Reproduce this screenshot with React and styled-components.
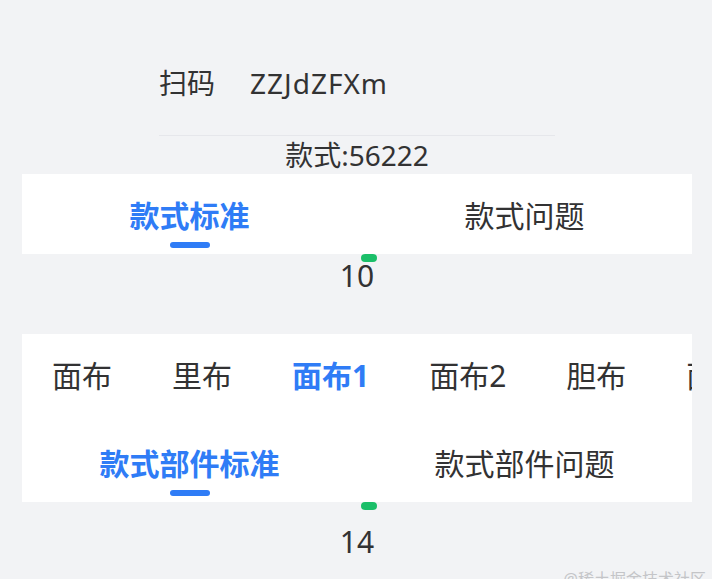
import React from "react";
import styled, { createGlobalStyle } from "styled-components";

const GlobalStyle = createGlobalStyle`
  html, body {
    margin: 0;
    padding: 0;
    background: #f2f3f5;
  }
  body {
    font-family: "Noto Sans", "Noto Sans CJK SC", sans-serif;
    color: #323233;
  }
`;

const Page = styled.div`
  position: relative;
  min-height: 579px;
  padding: 0 20px 0 22px;
  overflow: hidden;
`;

const ScanField = styled.div`
  display: flex;
  align-items: center;
  width: 396px;
  margin-left: 137px;
  padding: 63px 0 32px;
  border-bottom: 1px solid #e6e7eb;
  font-size: 28px;
  line-height: 40px;
`;

const FieldLabel = styled.span`
  width: 91px;
  flex: none;
`;

const FieldValue = styled.span`
  flex: 1;
  letter-spacing: 1px;
`;

const StyleCode = styled.div`
  text-align: center;
  font-size: 28px;
  line-height: 38px;
`;

const Card = styled.div`
  background: #fff;
`;

const TabRow = styled.div`
  display: flex;
  height: ${({ $height }) => $height || 80}px;
  padding-bottom: ${({ $lift }) => $lift || 0}px;
  box-sizing: border-box;
  overflow: hidden;
`;

const Tab = styled.div`
  position: relative;
  flex: ${({ $fill }) => ($fill ? "1" : "none")};
  padding: ${({ $fill }) => ($fill ? "0" : "0 30px")};
  display: flex;
  align-items: center;
  justify-content: center;
  font-size: 30px;
  white-space: nowrap;
  color: ${({ $active }) => ($active ? "#2f7cf6" : "#323233")};
  font-weight: ${({ $active }) => ($active ? 700 : 400)};
`;

const Line = styled.span`
  position: absolute;
  left: 50%;
  bottom: 6px;
  width: 40px;
  height: 6px;
  margin-left: -20px;
  border-radius: 3px;
  background: #2f7cf6;
`;

const CountBox = styled.div`
  position: relative;
  text-align: center;
  padding-top: ${({ $offset }) => $offset}px;
  margin-bottom: ${({ $after }) => $after || 0}px;
  font-size: 30px;
  line-height: 36px;
`;

const Dot = styled.span`
  position: absolute;
  top: 0;
  left: 50%;
  margin-left: 4px;
  width: 16px;
  height: 8px;
  border-radius: 4px;
  background: #1bbf69;
`;

const Watermark = styled.div`
  position: absolute;
  right: 6px;
  top: 566px;
  font-size: 16px;
  color: #c4c5c8;
  white-space: nowrap;
`;

const TwoTabs = ({ items, active }) => (
  <TabRow>
    {items.map((t, i) => (
      <Tab key={t} $fill $active={i === active}>
        {t}
        {i === active && <Line />}
      </Tab>
    ))}
  </TabRow>
);

const fabrics = ["面布", "里布", "面布1", "面布2", "胆布", "面布3"];

export default function App() {
  return (
    <Page>
      <GlobalStyle />
      <ScanField>
        <FieldLabel>扫码</FieldLabel>
        <FieldValue>ZZJdZFXm</FieldValue>
      </ScanField>
      <StyleCode>款式:56222</StyleCode>

      <Card>
        <TwoTabs items={["款式标准", "款式问题"]} active={0} />
      </Card>
      <CountBox $offset={4} $after={40}>
        <Dot />
        10
      </CountBox>

      <Card>
        <TabRow $height={88} $lift={8}>
          {fabrics.map((f, i) => (
            <Tab key={f} $active={i === 2}>
              {f}
            </Tab>
          ))}
        </TabRow>
        <TwoTabs items={["款式部件标准", "款式部件问题"]} active={0} />
      </Card>
      <CountBox $offset={22}>
        <Dot />
        14
      </CountBox>

      <Watermark>@稀土掘金技术社区</Watermark>
    </Page>
  );
}
